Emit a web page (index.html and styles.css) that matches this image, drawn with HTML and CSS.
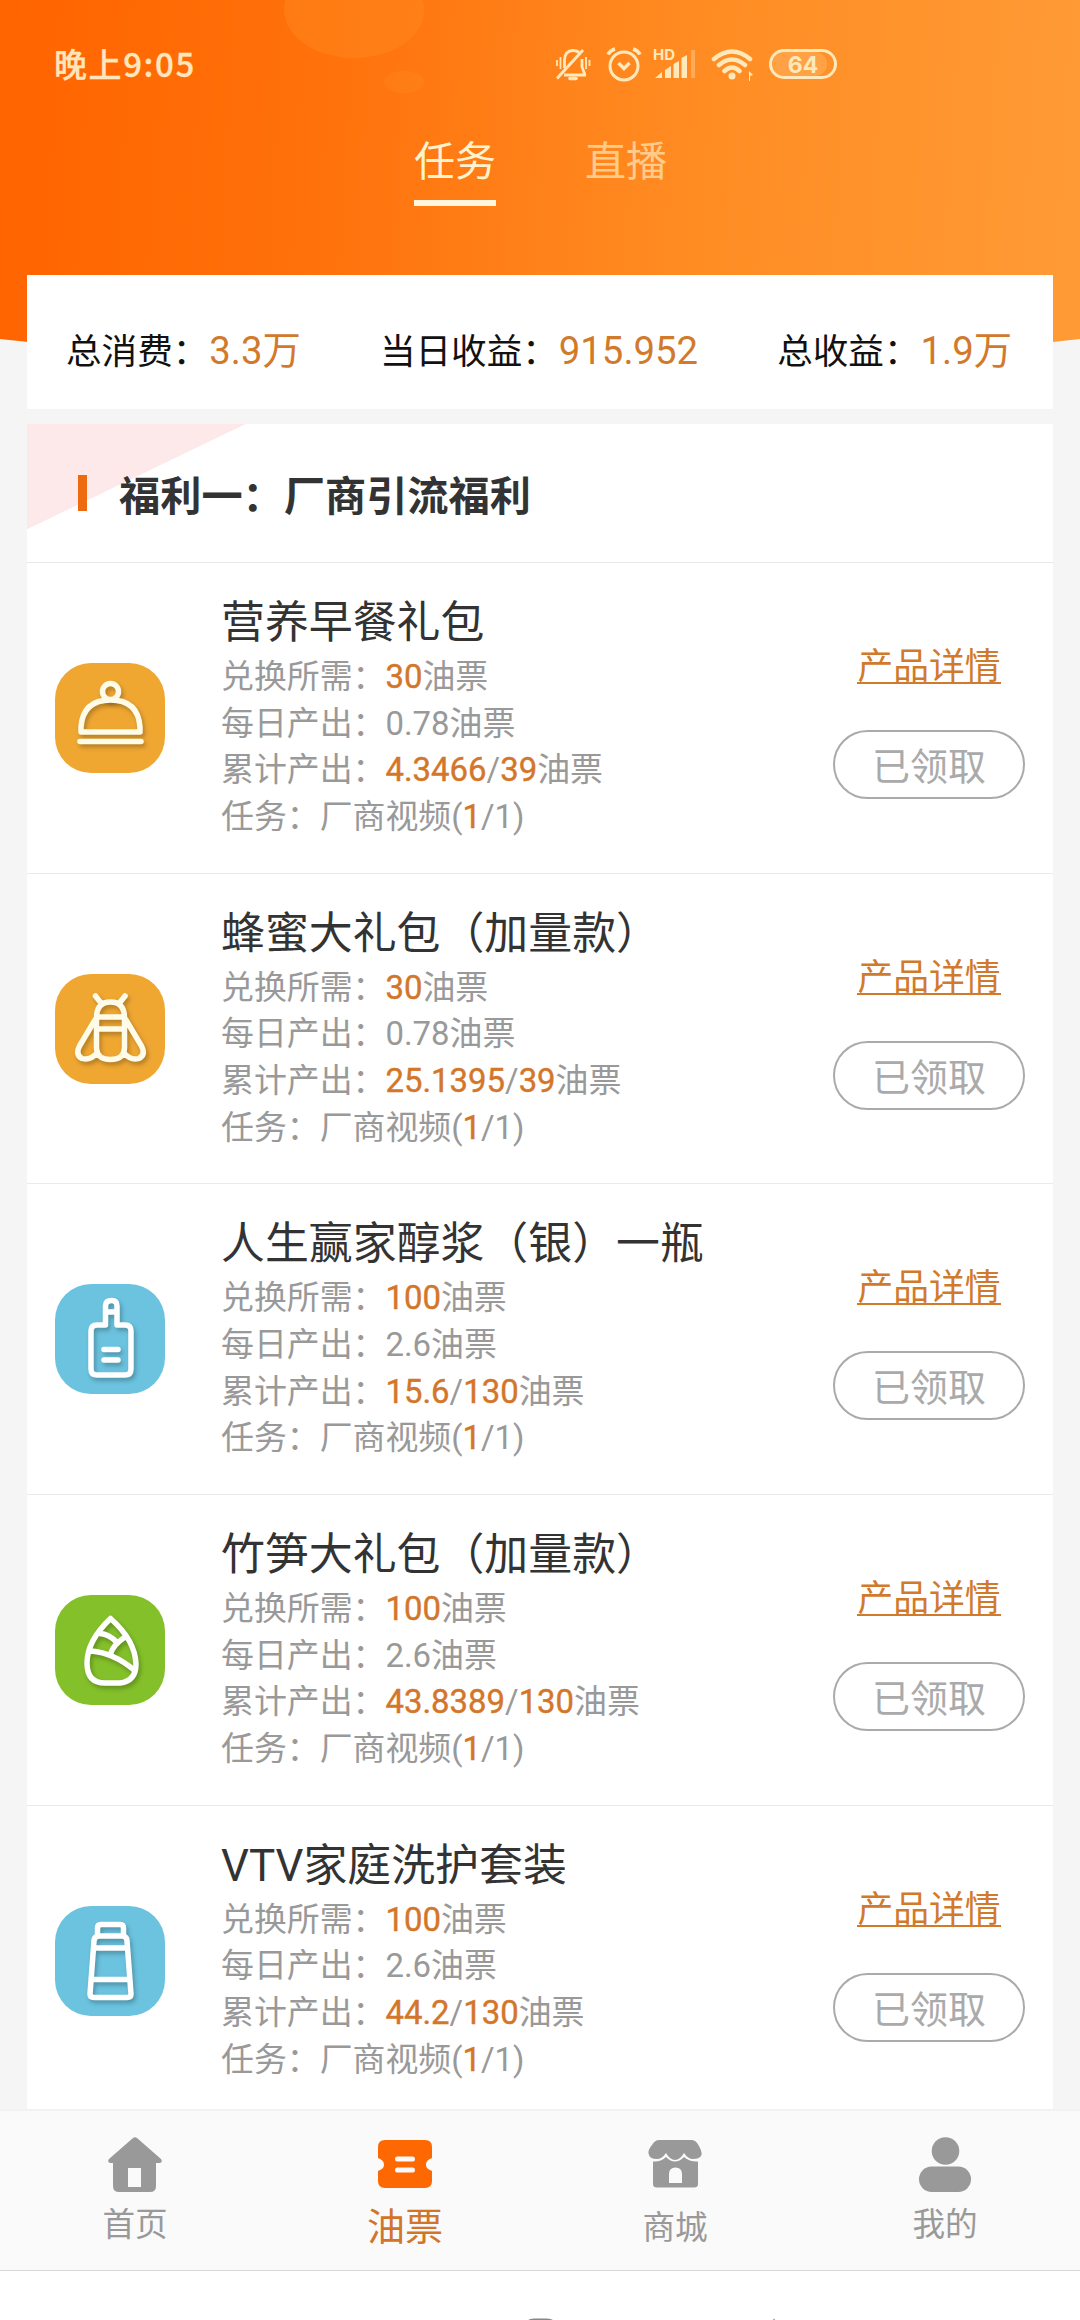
FILE: index.html
```html
<!DOCTYPE html>
<html lang="zh-CN">
<head>
<meta charset="utf-8">
<title>任务</title>
<link rel="stylesheet" href="styles.css">
</head>
<body>
<div class="screen">
  <svg class="backdrop" viewBox="0 0 1080 370" aria-hidden="true">
    <defs>
      <linearGradient id="sky" x1="0" y1="0" x2="1" y2="0.02">
        <stop offset="0" stop-color="#ff6400"/>
        <stop offset="0.3" stop-color="#ff710b"/>
        <stop offset="0.65" stop-color="#ff8c23"/>
        <stop offset="1" stop-color="#ff9a35"/>
      </linearGradient>
    </defs>
    <path d="M0 0H1080V339Q540 400 0 339Z" fill="url(#sky)"/>
    <ellipse cx="354" cy="10" rx="70" ry="48" fill="#ff8f22" opacity=".38"/>
    <ellipse cx="404" cy="82" rx="20" ry="11" fill="#ff8f22" opacity=".25"/>
  </svg>

  <header class="status">
    <span class="clock">晚上9:05</span>
    <svg class="status-icons" viewBox="0 0 290 44" aria-hidden="true">
      <g fill="none" stroke="#ffe9bb" stroke-width="3">
        <g stroke-width="2.800">
          <path d="M10 33H32M10.500 26V18Q11 8.500 19 8.500Q24 8.500 26 12M28 17V25L31 33"/>
          <path d="M3 36.500L29 8" stroke-width="3"/>
          <path d="M3 18V24M6.500 15V27M32 15V27M35.500 18V24" stroke-width="1.800"/>
          <path d="M16 36.500H22" stroke-width="3.500" stroke-linecap="round"/>
        </g>
        <circle cx="70" cy="24" r="14"/>
        <path d="M64.500 21L70 26.500L75.500 21M54 12.500Q56 8.500 61 7M79 7Q84 8.500 86 12.500" stroke-width="3.500"/>
        <path d="M160 17Q178 2 196 17M165 23Q178 12 191 23M170.500 29Q178 22 185.500 29" stroke-width="4.500" stroke-linecap="round"/>
        <rect x="216.500" y="8.500" width="65" height="27" rx="13.500"/>
      </g>
      <g fill="#ffe9bb">
        <rect x="218" y="10" width="55" height="24" rx="12" opacity=".2"/>
        <circle cx="178" cy="34" r="3.500"/>
        <path d="M101 36L108 30V36ZM111 28L117 24V36H111ZM119.500 22L125 19V36H119.500ZM127.500 16L133 13V36H127.500ZM195 29L199 33L196 34V39H195Z"/>
        <rect x="137" y="8" width="4" height="28" opacity=".35"/>
        <text x="99" y="18" font-size="15" textLength="22">HD</text>
        <text x="249" y="31" font-size="23" text-anchor="middle">64</text>
      </g>
    </svg>
  </header>

  <nav class="tabs">
    <a class="tab tab-active">任务</a>
    <a class="tab">直播</a>
  </nav>

  <section class="stats">
    <p>总消费：<b>3.3万</b></p>
    <p>当日收益：<b>915.952</b></p>
    <p>总收益：<b>1.9万</b></p>
  </section>

  <main class="card">
    <h2 class="card-title">福利一：厂商引流福利</h2>

    <article class="item">
      <svg class="badge amber" viewBox="0 0 110 110" aria-hidden="true">
        <circle cx="55.500" cy="28.500" r="8"/>
        <path d="M26 69V64Q28 37 55.500 37Q83 37 85 64V69ZM25 78.500H86"/>
      </svg>
      <div class="info">
        <h3>营养早餐礼包</h3>
        <p>兑换所需：<b>30</b>油票</p>
        <p>每日产出：0.78油票</p>
        <p>累计产出：<b>4.3466</b>/<b>39</b>油票</p>
        <p>任务：厂商视频(<b>1</b>/1)</p>
      </div>
      <div class="actions"><a class="detail">产品详情</a><button class="claimed">已领取</button></div>
    </article>

    <article class="item">
      <svg class="badge amber" viewBox="0 0 110 110" aria-hidden="true">
        <path d="M40.500 22L46 29M70 22L64.500 29M41.500 43Q42 28 55.500 28Q69 28 69.500 43V74Q69 85.500 55.500 85.500Q42 85.500 41.500 74ZM41.500 43H69.500M41.500 55H69.500M40 46L24.500 72Q20 81 27 84.500Q35 87 42 79M71 46L86.500 72Q91 81 84 84.500Q76 87 69 79"/>
      </svg>
      <div class="info">
        <h3>蜂蜜大礼包（加量款）</h3>
        <p>兑换所需：<b>30</b>油票</p>
        <p>每日产出：0.78油票</p>
        <p>累计产出：<b>25.1395</b>/<b>39</b>油票</p>
        <p>任务：厂商视频(<b>1</b>/1)</p>
      </div>
      <div class="actions"><a class="detail">产品详情</a><button class="claimed">已领取</button></div>
    </article>

    <article class="item">
      <svg class="badge blue" viewBox="0 0 110 110" aria-hidden="true">
        <path d="M50.500 41V22Q50.500 16.500 56.500 16.500Q62 16.500 62 22V41H70Q76 41 76 47V85Q76 91 70 91H42Q36 91 36 85V47Q36 41 42 41ZM50.500 28H62M49 65.500H63M49 76H63"/>
      </svg>
      <div class="info">
        <h3>人生赢家醇浆（银）一瓶</h3>
        <p>兑换所需：<b>100</b>油票</p>
        <p>每日产出：2.6油票</p>
        <p>累计产出：<b>15.6</b>/<b>130</b>油票</p>
        <p>任务：厂商视频(<b>1</b>/1)</p>
      </div>
      <div class="actions"><a class="detail">产品详情</a><button class="claimed">已领取</button></div>
    </article>

    <article class="item">
      <svg class="badge green" viewBox="0 0 110 110" aria-hidden="true">
        <path d="M55.500 23.500Q32 46 32 68Q32 88 50 88H65Q81 86 81 69Q80 45 55.500 23.500ZM45 38.500Q54 39 62 47.500M70 42Q58 50 55.500 59M36 56Q59 58 79 75"/>
      </svg>
      <div class="info">
        <h3>竹笋大礼包（加量款）</h3>
        <p>兑换所需：<b>100</b>油票</p>
        <p>每日产出：2.6油票</p>
        <p>累计产出：<b>43.8389</b>/<b>130</b>油票</p>
        <p>任务：厂商视频(<b>1</b>/1)</p>
      </div>
      <div class="actions"><a class="detail">产品详情</a><button class="claimed">已领取</button></div>
    </article>

    <article class="item">
      <svg class="badge blue" viewBox="0 0 110 110" aria-hidden="true">
        <path d="M42.500 29V22Q42.500 18.500 46 18.500H65Q68.500 18.500 68.500 22V29M43 30H68Q72 31 72 35L76 88Q76 91.500 72 91.500H39Q35 91.500 35 88L39 35Q39 31 43 30ZM39 42H72M37 73.500H74"/>
      </svg>
      <div class="info">
        <h3>VTV家庭洗护套装</h3>
        <p>兑换所需：<b>100</b>油票</p>
        <p>每日产出：2.6油票</p>
        <p>累计产出：<b>44.2</b>/<b>130</b>油票</p>
        <p>任务：厂商视频(<b>1</b>/1)</p>
      </div>
      <div class="actions"><a class="detail">产品详情</a><button class="claimed">已领取</button></div>
    </article>
  </main>

  <nav class="tabbar">
    <a class="entry">
      <svg viewBox="0 0 54 56" aria-hidden="true"><path fill-rule="evenodd" d="M25 1Q27 -.5 29 1L53 22Q55 25 52 26H48V49Q48 55 42 55H11Q5 55 5 49V26H2Q-1 25 1 22ZM20 31V50H33V31Z"/></svg>
      <span>首页</span>
    </a>
    <a class="entry entry-active">
      <svg viewBox="0 0 54 56" aria-hidden="true"><path fill-rule="evenodd" d="M7 3H47Q54 3 54 10V21Q48 23 48 27.500Q48 32 54 34V44Q54 51 47 51H7Q0 51 0 44V34Q6 32 6 27.500Q6 23 0 21V10Q0 3 7 3ZM19 19.500Q17 19.500 17 22Q17 24.500 19 24.500H35Q37 24.500 37 22Q37 19.500 35 19.500ZM19 30.500Q17 30.500 17 33Q17 35.500 19 35.500H35Q37 35.500 37 33Q37 30.500 35 30.500Z"/></svg>
      <span>油票</span>
    </a>
    <a class="entry entry-low">
      <svg viewBox="0 0 54 56" aria-hidden="true"><path d="M11 3H44Q48 3 51 9Q55 16 53 19Q51 22 45 22Q40 22 36 16Q32 23 27 23Q22 23 18 16Q14 22 9 22Q2 22 1 18Q-1 14 4 8Q7 3 11 3Z"/><path fill-rule="evenodd" d="M5 24.500Q13 25 18 20Q27 29 36 20Q42 25 50 24.500V47Q50 50.500 46 50.500H9Q5 50.500 5 47ZM21 46H34V37Q34 30.500 27.500 30.500Q21 30.500 21 37Z"/></svg>
      <span>商城</span>
    </a>
    <a class="entry">
      <svg viewBox="0 0 54 56" aria-hidden="true"><circle cx="27.500" cy="14" r="13.800"/><rect x="1" y="29.500" width="52" height="25.500" rx="12.700"/></svg>
      <span>我的</span>
    </a>
  </nav>
  <footer class="system">
    <svg viewBox="0 0 1080 49" aria-hidden="true"><path d="M528 49Q530 47.500 534 47.500H547Q551 47.500 553 49ZM773 49L774 47.500L775 49Z" fill="#888"/></svg>
  </footer>
</div>
</body>
</html>
```

FILE: styles.css
```css
* { box-sizing: border-box; margin: 0; padding: 0; }

body {
  width: 1080px;
  height: 2320px;
  overflow: hidden;
  background: #f5f5f5;
  color: #333;
  font-family: Roboto, "Noto Sans CJK SC", sans-serif;
}

.screen {
  position: relative;
  display: flex;
  flex-direction: column;
  height: 2320px;
}

/* Curved gradient lying behind the top of the page */
.backdrop {
  position: absolute;
  z-index: -1;
  top: 0;
  left: 0;
  width: 1080px;
  height: 370px;
}

.status {
  display: flex;
  height: 110px;
  padding: 42px 0 0 54px;
  color: #ffe6bd;
}

.clock {
  width: 500px;
  font: 500 33px/42px "Noto Sans CJK SC", sans-serif;
  letter-spacing: 1.6px;
  -webkit-text-stroke: 0.3px #ffe6bd;
}

.status-icons {
  width: 290px;
  height: 44px;
  font-family: Inter, sans-serif;
  font-weight: 700;
}

.tabs {
  display: flex;
  gap: 89px;
  height: 165px;
  padding: 21px 0 0 414px;
}

.tab {
  width: 82px;
  height: 75px;
  color: rgba(255, 235, 190, 0.7);
  font-size: 41px;
  line-height: 63px;
}

.tab-active {
  border-bottom: 6px solid #fff6dc;
  color: #fff3cf;
}

.stats {
  display: flex;
  justify-content: space-between;
  height: 134px;
  margin: 0 27px;
  padding: 0 41px 0 39px;
  background: #fff;
  color: #111;
  font-size: 35.6px;
  line-height: 152px;
  white-space: nowrap;
}

.stats b {
  margin-left: 1px;
  color: #d17a2c;
  font-size: 38.3px;
  font-weight: 400;
}

.card {
  flex: 1;
  min-height: 0;
  margin: 15px 27px 0;
  overflow: hidden;
  background: #fff;
}

.card-title {
  display: flex;
  align-items: center;
  gap: 32px;
  height: 139px;
  padding: 0 0 1px 51px;
  border-bottom: 1px solid #e8e8e8;
  background: linear-gradient(to bottom right, #fde9e9 50%, transparent 50.3%) 0 0 / 218px 105px no-repeat;
  color: #333;
  font-size: 41.2px;
  font-weight: 700;
}

.card-title::before {
  width: 9px;
  height: 36px;
  background: #ed6a10;
  content: "";
}

.item {
  display: flex;
  height: 310.7px;
  padding: 0 28px;
  border-bottom: 1px solid #eaeaea;
}

.badge {
  align-self: center;
  width: 110px;
  height: 110px;
  border-radius: 36px;
  fill: none;
  stroke: #fffbe9;
  stroke-width: 5.5;
  stroke-linecap: round;
  stroke-linejoin: round;
}

.badge path,
.badge circle { filter: drop-shadow(2px 3px 2px rgba(0, 0, 0, 0.25)); }

.amber { background: #efa732; }
.blue { background: #6bc3df; stroke: #fff; }
.green { background: #84c02a; stroke: #fff; }

.info {
  flex: 1;
  padding: 28px 0 0 56px;
  color: #999;
  font-size: 32.9px;
  line-height: 46.7px;
  white-space: nowrap;
}

.info h3 {
  margin-bottom: -1px;
  color: #333;
  font-size: 43.9px;
  font-weight: 400;
  line-height: 64px;
}

.info b {
  color: #d4762a;
  font-weight: 400;
  -webkit-text-stroke: 0.4px #d4762a;
}

.actions {
  display: flex;
  flex-direction: column;
  align-items: center;
  gap: 46px;
  width: 192px;
  padding-top: 77px;
}

.detail {
  border-bottom: 2px solid #d17a2c;
  height: 44px;
  color: #d17a2c;
  font-size: 35.8px;
  line-height: 55px;
}

.claimed {
  width: 192px;
  height: 69px;
  padding-top: 3px;
  border: 2.5px solid #aaa;
  border-radius: 35px;
  background: #fff;
  color: #aaa;
  font-family: inherit;
  font-size: 38px;
  line-height: 64px;
}

.tabbar {
  display: flex;
  justify-content: space-between;
  height: 162px;
  padding: 26px 75px 0;
  border-top: 2px solid #f2f2f2;
  border-bottom: 1px solid #d8d8d8;
  background: #fafafa;
}

.entry {
  display: flex;
  flex-direction: column;
  align-items: center;
  width: 120px;
  color: #999;
  font-size: 32.6px;
}

.entry svg {
  width: 54px;
  height: 56px;
  fill: #999;
}

.entry span {
  margin-top: 9px;
  line-height: 46px;
}

.entry-active { color: #d1752a; font-size: 38px; }
.entry-active svg { fill: #fd6803; }
.entry-active span { margin-top: 11px; }
.entry-low span { margin-top: 12px; }

.system {
  height: 49px;
  background: #fff;
}

.system svg { display: block; }
```
